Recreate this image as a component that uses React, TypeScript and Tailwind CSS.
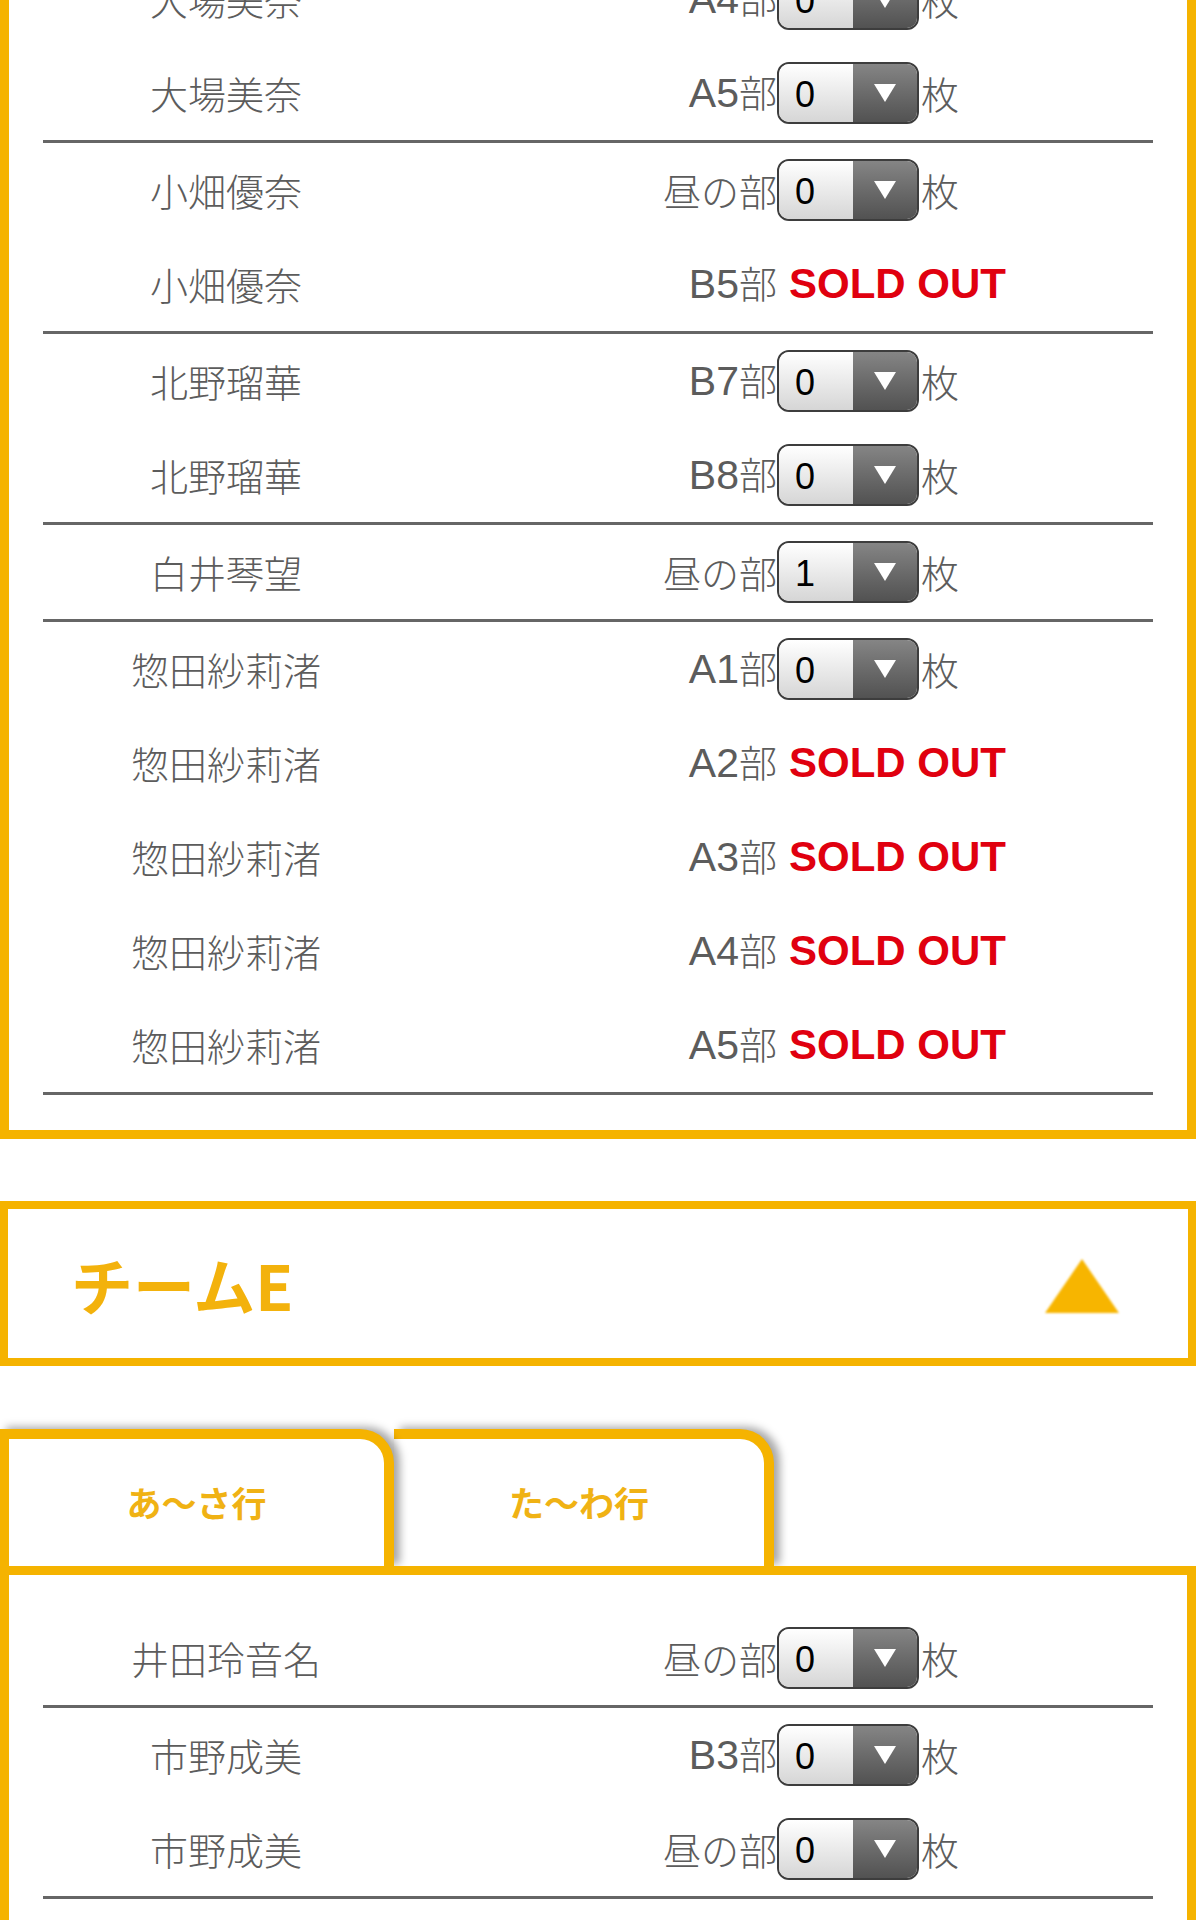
import React from "react";

type Row = { name: string; part: string; value: string | null };

const teamTop: Row[][] = [
  [
    { name: "大場美奈", part: "A4部", value: "0" },
    { name: "大場美奈", part: "A5部", value: "0" },
  ],
  [
    { name: "小畑優奈", part: "昼の部", value: "0" },
    { name: "小畑優奈", part: "B5部", value: null },
  ],
  [
    { name: "北野瑠華", part: "B7部", value: "0" },
    { name: "北野瑠華", part: "B8部", value: "0" },
  ],
  [{ name: "白井琴望", part: "昼の部", value: "1" }],
  [
    { name: "惣田紗莉渚", part: "A1部", value: "0" },
    { name: "惣田紗莉渚", part: "A2部", value: null },
    { name: "惣田紗莉渚", part: "A3部", value: null },
    { name: "惣田紗莉渚", part: "A4部", value: null },
    { name: "惣田紗莉渚", part: "A5部", value: null },
  ],
];

const teamE: Row[][] = [
  [{ name: "井田玲音名", part: "昼の部", value: "0" }],
  [
    { name: "市野成美", part: "B3部", value: "0" },
    { name: "市野成美", part: "昼の部", value: "0" },
  ],
];

// latin part of the label ("A5") is set a bit wider than the kanji
const PartLabel = ({ text }: { text: string }) => {
  const m = text.match(/^([A-Za-z0-9]+)(.*)$/);
  if (!m) return <>{text}</>;
  return (
    <>
      <span className="text-[41px] [font-family:'Liberation_Sans',sans-serif]">{m[1]}</span>
      {m[2]}
    </>
  );
};

const Select = ({ value }: { value: string }) => {
  return (
    <div className="flex h-[62px] w-[142px] overflow-hidden rounded-[12px] border-2 border-[#3d3d3d]">
      <div className="flex w-[74px] items-center bg-linear-to-b from-white to-[#d6d6d6] pl-[16px] pt-[3px] text-[36px] leading-none text-black [font-family:'Liberation_Sans',sans-serif]">
        {value}
      </div>
      <div className="flex flex-1 items-center justify-center bg-linear-to-b from-[#858585] to-[#525252]">
        <svg width="24" height="20" viewBox="0 0 24 20">
          <path d="M1 1 H23 L12 19 Z" fill="#fff" />
        </svg>
      </div>
    </div>
  );
};

const TicketRow = ({ row }: { row: Row }) => {
  return (
    <div className="grid h-[94px] grid-cols-[366px_368px_1fr] items-center text-[38px] font-light leading-none text-[#5c5c5c]">
      <div className="text-center">{row.name}</div>
      <div className="text-right">
        <PartLabel text={row.part} />
      </div>
      <div className="flex items-center">
        {row.value !== null ? (
          <>
            <Select value={row.value} />
            <span className="pl-[2px]">枚</span>
          </>
        ) : (
          <span className="pl-[12px] text-[42px] font-bold text-[#e0000f] [font-family:'Liberation_Sans',sans-serif]">
            SOLD OUT
          </span>
        )}
      </div>
    </div>
  );
};

const Groups = ({ groups }: { groups: Row[][] }) => {
  return (
    <>
      {groups.map((group, i) => (
        <div key={i} className="border-b-[3px] border-[#666]">
          {group.map((row, j) => (
            <TicketRow key={j} row={row} />
          ))}
        </div>
      ))}
    </>
  );
};

const App = () => {
  return (
    <div className="min-h-[1920px] overflow-hidden bg-white [font-family:'Noto_Sans_CJK_JP','Noto_Sans',sans-serif]">
      {/* team list continued from above */}
      <div className="-mt-[48px] border-x-[9px] border-b-[9px] border-[#f5b300] px-[34px] pb-[35px]">
        <Groups groups={teamTop} />
      </div>

      {/* team E header */}
      <div className="mt-[62px] flex h-[165px] items-center justify-between border-[8px] border-[#f5b300] pl-[63px] pr-[68px]">
        <span className="text-[62px] font-bold leading-none text-[#f3b20c]">チームE</span>
        <svg width="76" height="56" viewBox="0 0 76 56" className="mt-[4px] [filter:blur(0.8px)]">
          <path d="M38 1 L75 55 H1 Z" fill="#f7b500" />
        </svg>
      </div>

      {/* tabs */}
      <div className="mt-[63px] flex h-[137px] items-stretch">
        <div className="relative z-20 flex w-[394px] items-center justify-center rounded-tr-[34px] border-l-[9px] border-r-[10px] border-t-[10px] border-[#f5b300] bg-white text-[35px] font-bold text-[#f0b214] shadow-[6px_-2px_8px_rgba(0,0,0,0.35)]">
          あ〜さ行
        </div>
        <div className="relative z-10 flex w-[380px] items-center justify-center rounded-tr-[34px] border-r-[10px] border-t-[10px] border-[#f5b300] bg-white text-[35px] font-bold text-[#f0b214] shadow-[6px_-2px_8px_rgba(0,0,0,0.35)]">
          た〜わ行
        </div>
      </div>

      <div className="relative z-30 border-x-[9px] border-t-[9px] border-[#f5b300] bg-white px-[34px] pb-[60px] pt-[36px]">
        <Groups groups={teamE} />
      </div>
    </div>
  );
};

export default App;
